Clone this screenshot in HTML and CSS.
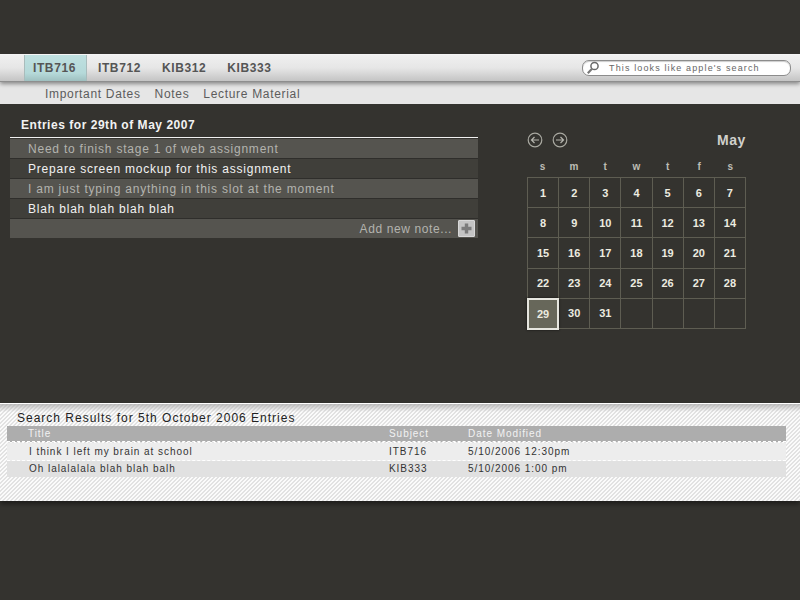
FILE: index.html
```html
<!DOCTYPE html>
<html lang="en">
<head>
<meta charset="utf-8">
<title>Entries</title>
<link rel="stylesheet" href="styles.css">
</head>
<body>
<header class="top">
  <nav class="tabs">
    <a class="tab active">ITB716</a>
    <a class="tab">ITB712</a>
    <a class="tab">KIB312</a>
    <a class="tab">KIB333</a>
    <div class="search">
      <svg class="search-icon" width="14" height="14" viewBox="0 0 14 14"><circle cx="8.500" cy="5" r="3.600" fill="none" stroke="#6a6a6a" stroke-width="1.500"/><path d="M6 7.800 1.800 12.300" stroke="#777" stroke-width="2.100" fill="none"/></svg>
      <span class="search-text">This looks like apple's search</span>
    </div>
  </nav>
  <div class="subnav">
    <a>Important Dates</a>
    <a>Notes</a>
    <a>Lecture Material</a>
  </div>
</header>
<main class="main">
  <section class="entries">
    <h1 class="entries-title">Entries for 29th of May 2007</h1>
    <ul class="notes">
      <li class="note odd">Need to finish stage 1 of web assignment</li>
      <li class="note even">Prepare screen mockup for this assignment</li>
      <li class="note odd">I am just typing anything in this slot at the moment</li>
      <li class="note even">Blah blah blah blah blah</li>
      <li class="note add">Add new note...
        <span class="plus"><svg width="15" height="15" viewBox="0 0 15 15"><path d="M7.500 2.500v10M2.500 7.500h10" stroke="#7b7b7b" stroke-width="3.400"/></svg></span>
      </li>
    </ul>
  </section>
  <section class="cal">
    <div class="cal-head">
      <svg class="arrow" width="16" height="16" viewBox="0 0 16 16"><circle cx="8" cy="8" r="6.800" fill="none" stroke="#a9a9a1" stroke-width="1.200"/><path d="M12 8H4.500M7.500 5 4.500 8l3 3" fill="none" stroke="#b5b5ae" stroke-width="1.200"/></svg>
      <svg class="arrow" width="16" height="16" viewBox="0 0 16 16"><circle cx="8" cy="8" r="6.800" fill="none" stroke="#a9a9a1" stroke-width="1.200"/><path d="M4 8h7.500M8.500 5l3 3-3 3" fill="none" stroke="#b5b5ae" stroke-width="1.200"/></svg>
      <span class="month">May</span>
    </div>
    <div class="weekdays"><span>s</span><span>m</span><span>t</span><span>w</span><span>t</span><span>f</span><span>s</span></div>
    <div class="days">
      <span>1</span><span>2</span><span>3</span><span>4</span><span>5</span><span>6</span><span>7</span>
      <span>8</span><span>9</span><span>10</span><span>11</span><span>12</span><span>13</span><span>14</span>
      <span>15</span><span>16</span><span>17</span><span>18</span><span>19</span><span>20</span><span>21</span>
      <span>22</span><span>23</span><span>24</span><span>25</span><span>26</span><span>27</span><span>28</span>
      <span class="today">29</span><span>30</span><span>31</span><span></span><span></span><span></span><span></span>
    </div>
  </section>
</main>
<section class="results">
  <h2 class="results-title">Search Results for 5th October 2006 Entries</h2>
  <div class="table">
    <div class="row head"><span>Title</span><span>Subject</span><span>Date Modified</span></div>
    <div class="row light"><span>I think I left my brain at school</span><span>ITB716</span><span>5/10/2006 12:30pm</span></div>
    <div class="row dark"><span>Oh lalalalala blah blah balh</span><span>KIB333</span><span>5/10/2006 1:00 pm</span></div>
  </div>
</section>
</body>
</html>
```
FILE: styles.css
```css
* { box-sizing: border-box; }
html, body { margin: 0; padding: 0; }
body {
  height: 600px;
  overflow: hidden;
  padding-top: 54px;
  background: #34332f;
  font-family: "Liberation Sans", Arial, sans-serif;
}
.tabs {
  position: relative;
  z-index: 2;
  display: flex;
  align-items: stretch;
  height: 28px;
  padding-left: 24px;
  border-top: 1px solid #f4f4f4;
  border-bottom: 1px solid #8e8e8e;
  background: linear-gradient(#f0f0f0, #e6e6e6 50%, #c4c4c4);
  box-shadow: 0 2px 4px rgba(60, 60, 60, .55);
}
.tab {
  display: flex;
  align-items: center;
  padding: 0 10px 0 9px;
  margin-right: 2px;
  color: #555;
  font-size: 12px;
  font-weight: bold;
  letter-spacing: .6px;
}
.tab.active {
  width: 63px;
  margin-right: 2px;
  border-left: 1px solid #a9bcbc;
  border-right: 1px solid #a9bcbc;
  padding: 0 0 0 8px;
  background: linear-gradient(#bfe0e0, #b5d9d9 70%, #9fc0c0);
}
.search {
  display: flex;
  align-items: center;
  align-self: flex-start;
  width: 209px;
  height: 16px;
  margin: 5px 9px 0 auto;
  padding-left: 3px;
  border: 1px solid #8c8c8c;
  border-radius: 7px;
  background: #fff;
  box-shadow: inset 0 1px 1px #ccc;
}
.search-icon { flex: none; }
.search-text {
  margin-left: 9px;
  color: #666;
  font-size: 9px;
  letter-spacing: 1.13px;
  white-space: nowrap;
}
.subnav {
  display: flex;
  gap: 14px;
  align-items: center;
  height: 22px;
  padding: 1px 0 0 45px;
  background: #e6e6e6;
  color: #5c5c5c;
  font-size: 12px;
  letter-spacing: .68px;
}
.main {
  display: flex;
  align-items: flex-start;
  height: 299px;
}
.entries { width: 468px; margin-left: 10px; }
.entries-title {
  height: 34px;
  margin: 0;
  padding: 14px 0 0 11px;
  border-bottom: 1px solid #f0f0f0;
  color: #f2f2f2;
  font-size: 12px;
  line-height: 15px;
  letter-spacing: .53px;
}
.notes {
  list-style: none;
  margin: 1px 0 0;
  padding: 0;
  font-size: 12px;
  letter-spacing: .78px;
}
.note {
  display: flex;
  align-items: center;
  height: 20px;
  padding: 0 0 0 18px;
  border-bottom: 1px solid #2f2e2b;
}
.note.odd { background: #55544f; color: #b3b3ae; }
.note.even { background: #403f3a; color: #f2f2f2; }
.note.add {
  justify-content: flex-end;
  gap: 6px;
  height: 19px;
  padding: 0 3px 0 0;
  border-bottom: 0;
  background: #55544f;
  color: #b3b3ae;
  letter-spacing: .6px;
}
.plus {
  display: flex;
  width: 17px;
  height: 17px;
  align-items: center;
  justify-content: center;
  border: 1px solid #d8d8d8;
  border-radius: 1px;
  background: #c4c4c4;
}
.cal { width: 219px; margin-left: 49px; }
.cal-head {
  display: flex;
  align-items: center;
  gap: 9px;
  height: 20px;
  margin-top: 26px;
}
.arrow { flex: none; }
.month {
  margin-left: auto;
  color: #d0d0cc;
  font-size: 14px;
  font-weight: bold;
  letter-spacing: .6px;
}
.weekdays {
  display: grid;
  grid-template-columns: repeat(7, 1fr);
  height: 17px;
  margin-top: 10px;
  color: #bdbdb5;
  font-size: 10px;
  font-weight: bold;
  line-height: 13px;
  text-align: center;
}
.days {
  display: grid;
  grid-template-columns: repeat(7, 1fr);
  grid-auto-rows: 30.2px;
  width: 219px;
  border-top: 1px solid #5e5d52;
  border-left: 1px solid #5e5d52;
}
.days span {
  display: flex;
  align-items: center;
  justify-content: center;
  border-right: 1px solid #5e5d52;
  border-bottom: 1px solid #5e5d52;
  color: #ecebe0;
  font-size: 11px;
  font-weight: bold;
}
.days .today {
  margin: -1px 0 -1px -1px;
  border: 2px solid #e6e6df;
  background: #67675a;
  box-shadow: 0 0 2px #111;
}
.results {
  position: relative;
  z-index: 1;
  height: 98px;
  border-top: 1px solid #fff;
  padding-top: 7px;
  background:
    linear-gradient(rgba(170, 170, 170, .75), rgba(200, 200, 200, 0) 8px) no-repeat,
    linear-gradient(135deg, #fbfbfb 25%, #e2e2e2 25% 50%, #fbfbfb 50% 75%, #e2e2e2 75%) 0 0 / 4px 4px;
  box-shadow: 0 3px 5px rgba(0, 0, 0, .45);
}
.results-title {
  margin: 0;
  padding-left: 17px;
  color: #222;
  font-size: 12px;
  font-weight: normal;
  line-height: 14px;
  letter-spacing: 1px;
}
.table { width: 779px; margin: 1px 0 0 7px; font-size: 10px; letter-spacing: .95px; }
.row {
  display: grid;
  grid-template-columns: 361px 79px 1fr;
  align-items: center;
  padding-left: 21px;
  border-bottom: 1px dashed #fff;
}
.row.head {
  height: 16px;
  margin-bottom: 1px;
  background: #adadad;
  color: #f2f2f2;
}
.row.light { height: 18px; padding-left: 22px; background: #ededed; color: #333; }
.row.dark { height: 16px; padding: 0 0 1px 22px; border-bottom: 0; background: #e1e1e1; color: #333; }
.row.light, .row.dark { grid-template-columns: 360px 79px 1fr; }
```
